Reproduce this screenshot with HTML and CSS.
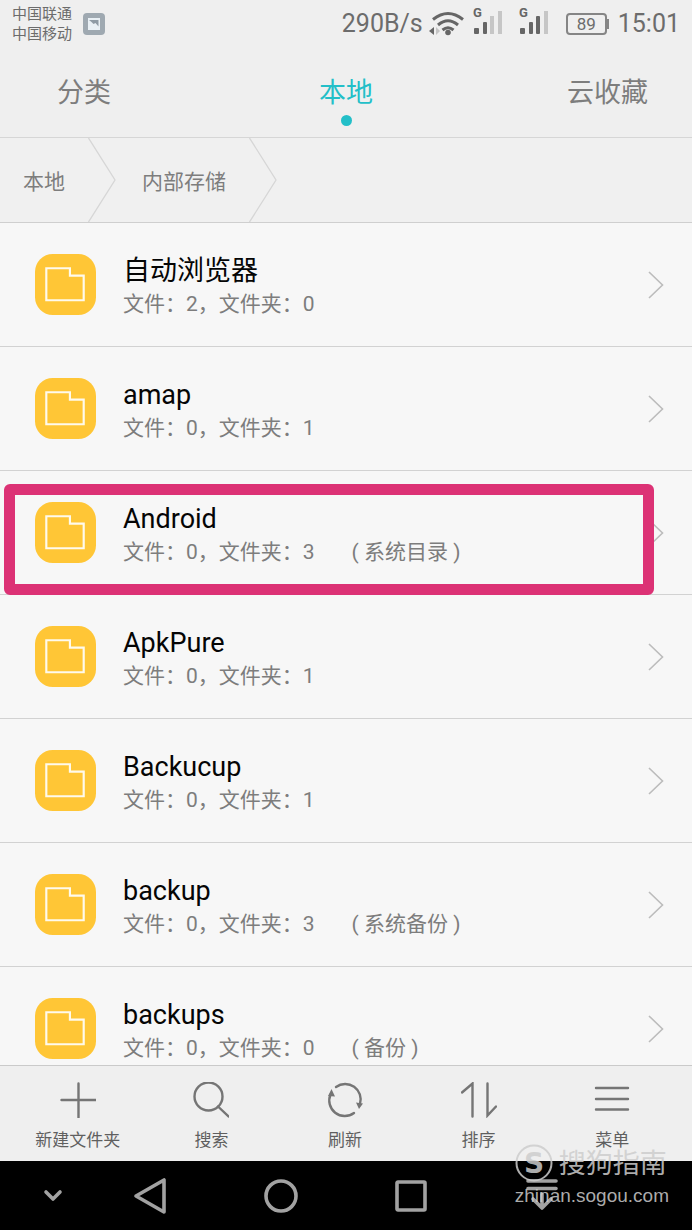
FILE: index.html
```html
<!DOCTYPE html>
<html lang="zh-CN">
<head>
<meta charset="utf-8">
<meta name="viewport" content="width=device-width, initial-scale=1">
<title>本地</title>
<link rel="stylesheet" href="styles.css">
</head>
<body>
<svg class="defs" aria-hidden="true">
  <symbol id="folder" viewBox="0 0 62 62">
    <rect width="62" height="62" rx="18" fill="#ffc636"/>
    <path d="M11.500 14.500H35.500V22H49.500V47H11.500Z" fill="none" stroke="#fffaec" stroke-width="2.200"/>
  </symbol>
  <symbol id="next" viewBox="0 0 16 28">
    <path d="M1 1L14.500 14L1 27" fill="none" stroke="#bcbcbc" stroke-width="1.600"/>
  </symbol>
  <symbol id="crumb" viewBox="0 0 28 84">
    <path d="M0.500 0L27 42L0.500 84" fill="none" stroke="#d6d6d6" stroke-width="1.300"/>
  </symbol>
</svg>

<header class="status">
  <div class="carriers"><span>中国联通</span><span>中国移动</span></div>
  <svg class="picture" viewBox="0 0 22 22"><rect width="22" height="22" rx="4" fill="#9fa9b1"/><rect x="5" y="5" width="12" height="12" fill="#e9f0f5"/><path d="M6 7H15.500V13.500L12.500 10L10.500 11L8.500 9Z" fill="#8f9ba5"/></svg>
  <span class="speed">290B/s</span>
  <svg class="wifi" viewBox="0 0 36 26">
    <g fill="none" stroke="#666" stroke-width="3"><path d="M4 8.500Q19 -3.500 34 8.500"/><path d="M9 14Q19 5.500 29 14"/><path d="M13.500 19Q19 14.500 24.500 19"/></g>
    <circle cx="19" cy="21.500" r="2.800" fill="#666"/><path d="M5 16V24L0 20Z" fill="#666"/><path d="M7 16V24L11 20Z" fill="#c4c4c4"/>
  </svg>
  <svg class="signal" viewBox="0 0 30 30"><text x="0" y="11">G</text><rect x="1" y="22" width="5" height="6" rx="1"/><rect x="10" y="16" width="4" height="12" rx="1"/><rect class="off" x="17" y="10" width="4" height="18"/><rect class="off" x="25" y="5" width="4" height="23"/></svg>
  <svg class="signal signal-two" viewBox="0 0 30 30"><text x="0" y="11">G</text><rect x="1" y="22" width="5" height="6" rx="1"/><rect x="10" y="16" width="4" height="12" rx="1"/><rect x="17" y="10" width="4" height="18" rx="1"/><rect class="off" x="25" y="5" width="4" height="23"/></svg>
  <span class="battery">89</span>
  <time class="clock">15:01</time>
</header>

<nav class="tabs">
  <a class="tab" href="#category">分类</a>
  <a class="tab active" href="#local" aria-current="page">本地</a>
  <a class="tab" href="#cloud">云收藏</a>
</nav>

<nav class="crumbs">
  <a href="#local">本地</a><svg><use href="#crumb"/></svg>
  <a href="#storage">内部存储</a><svg><use href="#crumb"/></svg>
</nav>

<main class="list-area">
  <ul class="list">
    <li class="row"><a href="#r1"><svg class="folder"><use href="#folder"/></svg><span class="info"><span class="name">自动浏览器</span><span class="meta">文件：2，文件夹：0</span></span><svg class="next"><use href="#next"/></svg></a></li>
    <li class="row"><a href="#r2"><svg class="folder"><use href="#folder"/></svg><span class="info"><span class="name">amap</span><span class="meta">文件：0，文件夹：1</span></span><svg class="next"><use href="#next"/></svg></a></li>
    <li class="row marked"><a href="#r3"><svg class="folder"><use href="#folder"/></svg><span class="info"><span class="name">Android</span><span class="meta">文件：0，文件夹：3<span class="note">( 系统目录 )</span></span></span><svg class="next"><use href="#next"/></svg></a></li>
    <li class="row"><a href="#r4"><svg class="folder"><use href="#folder"/></svg><span class="info"><span class="name">ApkPure</span><span class="meta">文件：0，文件夹：1</span></span><svg class="next"><use href="#next"/></svg></a></li>
    <li class="row"><a href="#r5"><svg class="folder"><use href="#folder"/></svg><span class="info"><span class="name">Backucup</span><span class="meta">文件：0，文件夹：1</span></span><svg class="next"><use href="#next"/></svg></a></li>
    <li class="row"><a href="#r6"><svg class="folder"><use href="#folder"/></svg><span class="info"><span class="name">backup</span><span class="meta">文件：0，文件夹：3<span class="note">( 系统备份 )</span></span></span><svg class="next"><use href="#next"/></svg></a></li>
    <li class="row"><a href="#r7"><svg class="folder"><use href="#folder"/></svg><span class="info"><span class="name">backups</span><span class="meta">文件：0，文件夹：0<span class="note">( 备份 )</span></span></span><svg class="next"><use href="#next"/></svg></a></li>
  </ul>
</main>

<div class="toolbar">
  <button type="button"><svg viewBox="0 0 36 36"><path d="M18.500 1.500V35.500M1.500 18H35.500"/></svg>新建文件夹</button>
  <button type="button"><svg viewBox="0 0 36 36"><circle cx="15.500" cy="14.500" r="14"/><path d="M25 24.500L35.500 34.500"/></svg>搜索</button>
  <button type="button"><svg viewBox="0 0 36 36"><path d="M9 5A15.500 15.500 0 0 1 33 22M27 31A15.500 15.500 0 0 1 3.500 12.500"/><path class="solid" d="M4.500 7L8 14.500L1 14ZM29 20.500L36 21.500L32 27Z"/></svg>刷新</button>
  <button type="button"><svg viewBox="0 0 36 36"><path d="M1 10.500L11.500 1.500V34.500M26.500 1.500V33.500L35 24.500"/></svg>排序</button>
  <button type="button"><svg viewBox="0 0 36 36"><path d="M2 6H34M2 17H34M2 27.500H34"/></svg>菜单</button>
</div>

<footer class="system">
  <button type="button" class="hide" aria-label="隐藏"><svg width="20" height="20" viewBox="0 0 20 20"><path d="M3 6L10 13L17 6"/></svg></button>
  <button type="button" aria-label="返回"><svg width="36" height="38" viewBox="0 0 36 38"><path d="M32 3V35L4 19Z"/></svg></button>
  <button type="button" aria-label="主页"><svg width="36" height="38" viewBox="0 0 36 38"><circle cx="18" cy="19" r="15"/></svg></button>
  <button type="button" aria-label="最近"><svg width="36" height="38" viewBox="0 0 36 38"><rect x="4" y="5" width="28" height="28" rx="1"/></svg></button>
  <button type="button" aria-label="通知"><svg width="36" height="38" viewBox="0 0 36 38"><path d="M4 4H32M4 11.500H32M18 17V30M9 22L18 31L27 22"/></svg></button>
</footer>

<div class="watermark">
  <svg class="logo" viewBox="0 0 38 38"><circle cx="19" cy="19" r="17.500"/><text x="19" y="29" text-anchor="middle">S</text></svg>
  <span class="brand">搜狗指南</span>
  <span class="site">zhinan.sogou.com</span>
</div>
</body>
</html>
```
FILE: styles.css
```css
* { box-sizing: border-box; }

body {
  position: relative;
  display: flex;
  flex-direction: column;
  height: 100vh;
  margin: 0;
  background: #efefef;
  color: #7d7d7d;
  font-family: Roboto, "Noto Sans CJK SC", sans-serif;
}

a { color: inherit; text-decoration: none; }
button { border: 0; padding: 0; background: none; color: inherit; font: inherit; }
svg { flex: none; display: block; }
.defs { position: absolute; width: 0; height: 0; }

.status {
  display: flex;
  align-items: center;
  height: 48px;
  padding: 0 12px;
  color: #6c6c6c;
  font-size: 25px;
  line-height: 32px;
}
.carriers { display: grid; font-size: 15px; line-height: 20px; }
.picture { width: 22px; height: 22px; margin-left: 11px; }
.speed { margin-left: auto; }
.wifi { width: 36px; height: 26px; margin-left: 6px; }
.signal { width: 30px; height: 30px; overflow: visible; margin-left: 8px; margin-bottom: 6px; fill: #666; font-size: 13px; line-height: 16px; font-weight: 700; }
.signal-two { margin-left: 16px; }
.signal .off { fill: #c6c6c6; }
.battery {
  position: relative;
  width: 41px;
  height: 22px;
  margin: 0 11px 0 17px;
  border: 2px solid #858585;
  border-radius: 4px;
  font-size: 17px;
  line-height: 19px;
  text-align: center;
}
.battery::after {
  content: "";
  position: absolute;
  top: 4px;
  right: -4px;
  width: 2px;
  height: 10px;
  background: #858585;
}

.tabs {
  display: grid;
  grid-template-columns: 1fr auto 1fr;
  align-items: center;
  height: 90px;
  padding: 0 44px;
  border-bottom: 1px solid #d6d6d6;
  font-size: 27px;
  line-height: 36px;
}
.tab:first-child { padding-left: 13px; }
.tab:last-child { text-align: right; }
.active { position: relative; color: #23bfc8; }
.active::after {
  content: "";
  position: absolute;
  top: 40px;
  left: calc(50% - 5px);
  width: 11px;
  height: 11px;
  border-radius: 50%;
  background: #23bfc8;
}

.crumbs {
  display: flex;
  align-items: center;
  height: 85px;
  border-bottom: 1px solid #cfcfcf;
  background: #f0f0f0;
  font-size: 21px;
  line-height: 32px;
}
.crumbs a { padding: 4px 23px 0 26px; }
.crumbs a:first-child { padding-left: 23px; }
.crumbs svg { width: 28px; height: 84px; }

.list-area { flex: 1 1 0; min-height: 0; overflow: hidden; background: #f7f7f7; }
.list { margin: 0; padding: 0; list-style: none; }
.row { position: relative; border-bottom: 1px solid #d2d2d2; }
.row a { display: flex; align-items: flex-start; height: 123px; padding: 31px 28px 0 35px; }
.folder { width: 61px; height: 61px; }
.info { display: grid; flex: 1; margin-left: 27px; }
.name { color: #050505; font-size: 27px; line-height: 34px; }
.meta { font-size: 21px; line-height: 32px; }
.note { margin-left: 37px; }
.next { width: 16px; height: 28px; margin-top: 17px; }
.marked::after {
  content: "";
  position: absolute;
  top: 13px;
  right: 38px;
  bottom: -1px;
  left: 4px;
  border: 11px solid #dc3275;
  border-radius: 6px;
}

.toolbar {
  display: grid;
  grid-template-columns: repeat(5, 1fr);
  height: 96px;
  padding: 0 13px 0 11px;
  border-top: 1px solid #cacaca;
  color: #5f5f5f;
  font-size: 17px;
  line-height: 24px;
}
.toolbar button { display: flex; flex-direction: column; align-items: center; gap: 10px; padding-top: 16px; }
.toolbar svg { width: 36px; height: 36px; fill: none; stroke: #757575; stroke-width: 2.4; stroke-linecap: round; }
.toolbar .solid { fill: #757575; stroke: none; }

.system {
  display: grid;
  grid-template-columns: 85px repeat(4, 1fr) 85px;
  height: 69px;
  background: #000;
}
.system button { display: flex; align-items: center; justify-content: center; }
.system .hide { justify-content: flex-end; padding-right: 22px; }
.system svg { fill: none; stroke: #a2a2a2; stroke-width: 3.6; stroke-linecap: round; stroke-linejoin: round; }

.watermark {
  position: absolute;
  right: 23px;
  bottom: 20px;
  display: grid;
  grid-template-columns: auto 1fr;
  align-items: center;
  column-gap: 6px;
  color: rgba(205, 205, 205, 0.85);
  pointer-events: none;
}
.logo { width: 38px; height: 38px; fill: none; stroke: rgba(205, 205, 205, 0.85); stroke-width: 2; }
.logo text { fill: rgba(205, 205, 205, 0.85); stroke: none; font: 700 28px "DejaVu Sans", sans-serif; }
.brand { padding-top: 2px; font-size: 27px; line-height: 36px; }
.site { grid-column: 1 / -1; font: 19px/28px "Liberation Sans", sans-serif; }
```
